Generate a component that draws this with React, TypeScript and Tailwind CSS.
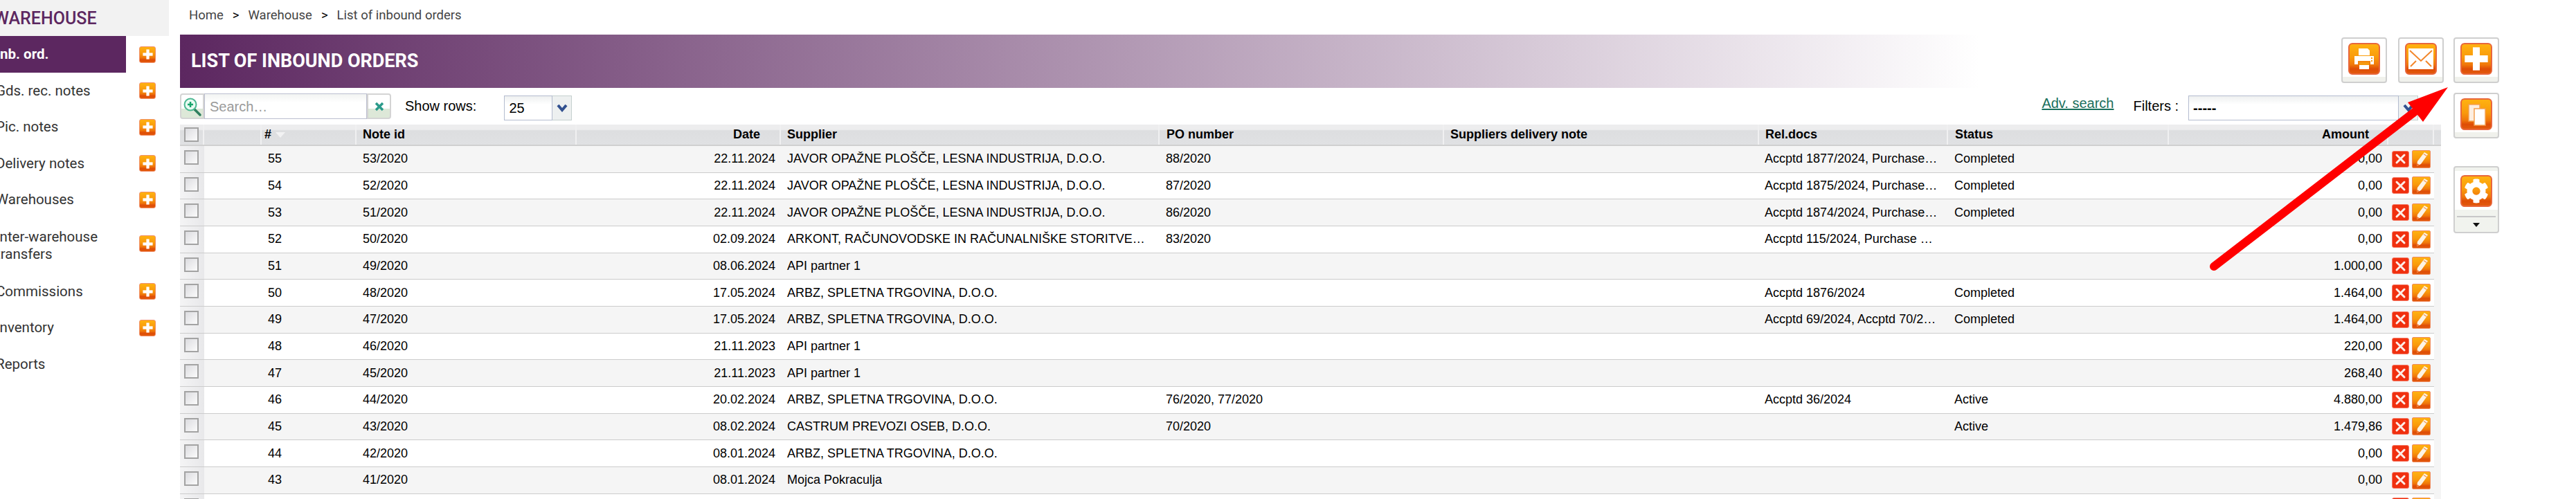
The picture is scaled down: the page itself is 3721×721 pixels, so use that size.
import { FaCog } from "react-icons/fa";

const sans = "font-['Liberation_Sans',Arial,sans-serif]";
const roboto = "font-['Roboto',sans-serif]";

// column template shared by the header and the body rows
const cols = "grid grid-cols-[35px_83px_137px_318px_295px_547px_411px_455px_273px_319px_317px_66px]";

const orange = "bg-[linear-gradient(to_bottom,#ffb210_0%,#f99a0c_45%,#f0780a_70%,#de4c06_85%,#e25a0c_100%)]";

type Row = {
  n: string;
  note: string;
  date: string;
  supplier: string;
  po?: string;
  rel?: string;
  status?: string;
  amount: string;
};

const JAVOR = "JAVOR OPAŽNE PLOŠČE, LESNA INDUSTRIJA, D.O.O.";
const ARBZ = "ARBZ, SPLETNA TRGOVINA, D.O.O.";

const rows: Row[] = [
  { n: "55", note: "53/2020", date: "22.11.2024", supplier: JAVOR, po: "88/2020", rel: "Accptd 1877/2024, Purchase…", status: "Completed", amount: "0,00" },
  { n: "54", note: "52/2020", date: "22.11.2024", supplier: JAVOR, po: "87/2020", rel: "Accptd 1875/2024, Purchase…", status: "Completed", amount: "0,00" },
  { n: "53", note: "51/2020", date: "22.11.2024", supplier: JAVOR, po: "86/2020", rel: "Accptd 1874/2024, Purchase…", status: "Completed", amount: "0,00" },
  { n: "52", note: "50/2020", date: "02.09.2024", supplier: "ARKONT, RAČUNOVODSKE IN RAČUNALNIŠKE STORITVE…", po: "83/2020", rel: "Accptd 115/2024, Purchase …", amount: "0,00" },
  { n: "51", note: "49/2020", date: "08.06.2024", supplier: "API partner 1", amount: "1.000,00" },
  { n: "50", note: "48/2020", date: "17.05.2024", supplier: ARBZ, rel: "Accptd 1876/2024", status: "Completed", amount: "1.464,00" },
  { n: "49", note: "47/2020", date: "17.05.2024", supplier: ARBZ, rel: "Accptd 69/2024, Accptd 70/2…", status: "Completed", amount: "1.464,00" },
  { n: "48", note: "46/2020", date: "21.11.2023", supplier: "API partner 1", amount: "220,00" },
  { n: "47", note: "45/2020", date: "21.11.2023", supplier: "API partner 1", amount: "268,40" },
  { n: "46", note: "44/2020", date: "20.02.2024", supplier: ARBZ, po: "76/2020, 77/2020", rel: "Accptd 36/2024", status: "Active", amount: "4.880,00" },
  { n: "45", note: "43/2020", date: "08.02.2024", supplier: "CASTRUM PREVOZI OSEB, D.O.O.", po: "70/2020", status: "Active", amount: "1.479,86" },
  { n: "44", note: "42/2020", date: "08.01.2024", supplier: ARBZ, amount: "0,00" },
  { n: "43", note: "41/2020", date: "08.01.2024", supplier: "Mojca Pokraculja", amount: "0,00" },
];

const menu = ["Gds. rec. notes", "Pic. notes", "Delivery notes", "Warehouses"];

function PlusGlyph({ size }: { size: number }) {
  return (
    <svg width={size} height={size} viewBox="0 0 24 24" fill="#fff">
      <rect x="9" y="2" width="6" height="20" />
      <rect x="2" y="9" width="20" height="6" />
    </svg>
  );
}

function SmallPlus() {
  return (
    <div className={`w-[24px] h-[24px] rounded-[3px] border border-[#f0906a] flex items-center justify-center ${orange}`}>
      <PlusGlyph size={17} />
    </div>
  );
}

function OrangeBox({ children }: { children: React.ReactNode }) {
  return (
    <div className={`w-[46px] h-[46px] rounded-[6px] border-2 border-[#e8673c] flex items-center justify-center ${orange}`}>
      {children}
    </div>
  );
}

function ToolButton({ children, className = "" }: { children: React.ReactNode; className?: string }) {
  return (
    <div className={`w-[66px] h-[66px] rounded-[4px] border-2 border-[#cfcfcf] bg-[linear-gradient(to_bottom,#fff_88%,#f0f1ec_88%)] flex justify-center pt-[6px] ${className}`}>
      <OrangeBox>{children}</OrangeBox>
    </div>
  );
}

function Checkbox() {
  return (
    <div className="w-[21px] h-[21px] border-2 border-[#a3a3a3] bg-[linear-gradient(135deg,#dcdce0,#fbfbfb)]" />
  );
}

function DeleteIcon() {
  return (
    <div className="w-[25px] h-[24px] rounded-[3px] bg-[#f0300f] border border-[#f57a66] flex items-center justify-center">
      <svg width="17" height="17" viewBox="0 0 17 17" stroke="#fdeee8" strokeWidth="3" strokeLinecap="round">
        <path d="M3 3 L14 14 M14 3 L3 14" />
      </svg>
    </div>
  );
}

function EditIcon() {
  return (
    <div className={`w-[27px] h-[26px] rounded-[2px] border border-[#ef8a5c] flex items-center justify-center ${orange}`}>
      <svg width="24" height="24" viewBox="0 0 24 24">
        <path d="M16 2 L21 5 L11 19 L5 22 L6 15 Z" fill="#fdf3e4" />
        <path d="M5 22 L5.6 18 L8.5 20 Z" fill="#f06a1a" />
        <path d="M15 4.5 L19.5 7.5" stroke="#f09a5a" strokeWidth="1.5" />
      </svg>
    </div>
  );
}

function SelectBox({ value, width, btn, bold }: { value: string; width: string; btn: string; bold?: boolean }) {
  return (
    <div className="flex h-[36px]">
      <div className={`${width} h-full border border-[#b4bccf] bg-[linear-gradient(to_bottom,#eef0f0,#fff_35%)] flex items-center px-[6px] text-[20px] text-black ${bold ? "font-bold" : ""}`}>
        {value}
      </div>
      <div className={`${btn} h-full border border-l-0 border-[#c5d0cf] bg-[#edf0f0] flex items-center justify-center`}>
        <svg width="16" height="12" viewBox="0 0 16 12" fill="none" stroke="#31508f" strokeWidth="4">
          <path d="M2 2 L8 9 L14 2" />
        </svg>
      </div>
    </div>
  );
}

function HeaderCell({ children, className = "" }: { children?: React.ReactNode; className?: string }) {
  return (
    <div className={`h-full flex items-center border-r-2 border-[#f0f0f1] font-bold text-[18px] text-black ${className}`}>
      {children}
    </div>
  );
}

export default function App() {
  return (
    <div className={`relative w-[3721px] h-[721px] overflow-hidden bg-white flex ${sans}`}>
      {/* sidebar, scrolled a little to the left */}
      <aside className={`w-[244px] shrink-0 ${roboto} text-[20.5px] text-[#333]`}>
        <div className="h-[52px] bg-[#f2f2f2] flex items-center pt-[2px]">
          <span className="-ml-[9px] text-[25px] font-medium text-[#5c2760]">WAREHOUSE</span>
        </div>
        <div className="h-[53px] flex items-center">
          <div className="w-[182px] h-full bg-[#5c2760] flex items-center text-white font-bold">
            <span className="-ml-[6px]">Inb. ord.</span>
          </div>
          <div className="ml-[19px]"><SmallPlus /></div>
        </div>
        {menu.map((m) => (
          <div key={m} className="h-[52.5px] flex items-center">
            <span className="w-[207px] -ml-[6px] shrink-0">{m}</span>
            <SmallPlus />
          </div>
        ))}
        <div className="h-[80px] flex items-center">
          <span className="w-[207px] -ml-[6px] shrink-0 leading-[25px]">Inter-warehouse<br />transfers</span>
          <div className="mb-[6px]"><SmallPlus /></div>
        </div>
        <div className="h-[52.5px] flex items-center">
          <span className="w-[207px] -ml-[6px] shrink-0">Commissions</span>
          <SmallPlus />
        </div>
        <div className="h-[52.5px] flex items-center">
          <span className="w-[207px] -ml-[6px] shrink-0">Inventory</span>
          <SmallPlus />
        </div>
        <div className="h-[52.5px] flex items-center">
          <span className="-ml-[6px]">Reports</span>
        </div>
      </aside>

      <main className="w-[3284px] ml-[16px] shrink-0">
        <div className={`h-[50px] flex items-center pl-[13px] pb-[4px] gap-[13px] text-[18.5px] text-[#444] ${roboto}`}>
          <span>Home</span><span className="text-black">&gt;</span>
          <span>Warehouse</span><span className="text-black">&gt;</span>
          <span>List of inbound orders</span>
        </div>

        {/* title banner + print / mail buttons */}
        <div className="h-[77px] flex">
          <div className={`w-[2600px] h-full flex items-center pl-[16px] bg-[linear-gradient(to_right,#5c2760,#ffffff)] text-white font-bold text-[27px] ${roboto}`}>
            LIST OF INBOUND ORDERS
          </div>
          <div className="flex ml-[522px] mt-[4px] gap-[16px]">
            <ToolButton>
              <svg width="34" height="34" viewBox="0 0 34 34" fill="#fff">
                <path d="M9 2 H22 L25 5 V12 H9 Z" />
                <path d="M3 13 H31 V25 H26 V20 H8 V25 H3 Z" />
                <rect x="10" y="22" width="14" height="10" />
                <rect x="10" y="22" width="14" height="4" fill="#f59a10" />
                <rect x="27" y="15" width="2" height="2" fill="#f59a10" />
                <rect x="27" y="19" width="2" height="2" fill="#f59a10" />
              </svg>
            </ToolButton>
            <ToolButton>
              <svg width="38" height="32" viewBox="0 0 38 32">
                <rect x="1" y="1" width="36" height="30" fill="#fff" />
                <path d="M3 4 L19 19 L35 4 M4 27 L12 19 M34 27 L26 19" fill="none" stroke="#f3862a" strokeWidth="2" />
              </svg>
            </ToolButton>
          </div>
        </div>

        {/* search row */}
        <div className="h-[53px] flex items-start pt-[8px] text-[20px]">
          <div className="w-[35px] h-[37px] rounded-l-[4px] border-2 border-[#d4d4d4] bg-[linear-gradient(to_bottom,#fff_60%,#dde8d8_60%)] flex items-center justify-center">
            <svg width="28" height="30" viewBox="0 0 28 30">
              <path d="M17 19 L25 27" stroke="#2f7f5f" strokeWidth="3.5" strokeLinecap="round" />
              <circle cx="11" cy="12" r="8.5" fill="#e8fbf2" stroke="#4cb892" strokeWidth="2" />
              <path d="M11 8 V16 M7 12 H15" stroke="#17a56c" strokeWidth="2.5" />
            </svg>
          </div>
          <div className="w-[235px] h-[37px] border border-[#bcbfd0] bg-[linear-gradient(to_bottom,#f2f4f2,#fff_35%)] flex items-center pl-[7px] text-[#9a9a9a]">
            Search…
          </div>
          <div className="w-[35px] h-[37px] rounded-r-[4px] border-2 border-[#d4d4d4] bg-[linear-gradient(to_bottom,#fff_60%,#dde8d8_60%)] flex items-center justify-center">
            <svg width="16" height="16" viewBox="0 0 16 16" stroke="#2a9a8a" strokeWidth="3.5">
              <path d="M3 3 L13 13 M13 3 L3 13" />
            </svg>
          </div>
          <span className="ml-[20px] leading-[37px] text-black">Show rows:</span>
          <div className="ml-[40px] mt-[3px]">
            <SelectBox value="25" width="w-[70px]" btn="w-[28px]" />
          </div>
          <a className="ml-[2123px] leading-[28px] text-[#1a6f5c] underline">Adv. search</a>
          <span className="ml-[28px] leading-[37px] text-black">Filters :</span>
          <div className="ml-[14px] mt-[3px]">
            <SelectBox value="-----" width="w-[304px]" btn="w-[28px]" bold />
          </div>
        </div>

        {/* table */}
        <div className="w-[3266px] h-[541px] bg-[#f5f5f5] overflow-hidden">
          <div className={`${cols} w-[3266px] h-[31px] items-center bg-[linear-gradient(to_bottom,#ededee_25%,#dddee0_30%,#e0e1e3_100%)] border-b-2 border-[#d0d0d0]`}>
            <HeaderCell className="pl-[6px]"><Checkbox /></HeaderCell>
            <HeaderCell />
            <HeaderCell className="pl-[4px]">
              #
              <svg className="ml-[6px]" width="14" height="8" viewBox="0 0 14 8" fill="#f2f2f3"><path d="M0 0 H14 L7 8 Z" /></svg>
            </HeaderCell>
            <HeaderCell className="pl-[9px]">Note id</HeaderCell>
            <HeaderCell className="justify-end pr-[28px]">Date</HeaderCell>
            <HeaderCell className="pl-[9px]">Supplier</HeaderCell>
            <HeaderCell className="pl-[10px]">PO number</HeaderCell>
            <HeaderCell className="pl-[9px]">Suppliers delivery note</HeaderCell>
            <HeaderCell className="pl-[9px]">Rel.docs</HeaderCell>
            <HeaderCell className="pl-[10px]">Status</HeaderCell>
            <HeaderCell className="justify-end pr-[26px]">Amount</HeaderCell>
            <HeaderCell />
          </div>

          {rows.map((r, i) => (
            <div
              key={r.n}
              className={`${cols} w-[3256px] h-[38.67px] items-center border-b border-[#cccccc] text-[18px] text-black ${i % 2 === 0 ? "bg-[#f5f5f5]" : "bg-white"}`}
            >
              <div className="h-full pl-[6px] pt-[6px] bg-[linear-gradient(to_right,#f4f4f5,#e8e8ea)]"><Checkbox /></div>
              <div />
              <div className="pl-[9px]">{r.n}</div>
              <div className="pl-[9px]">{r.note}</div>
              <div className="text-right pr-[8px]">{r.date}</div>
              <div className="pl-[9px] whitespace-nowrap overflow-hidden">{r.supplier}</div>
              <div className="pl-[9px]">{r.po}</div>
              <div />
              <div className="pl-[8px] whitespace-nowrap overflow-hidden">{r.rel}</div>
              <div className="pl-[9px]">{r.status}</div>
              <div className="text-right pr-[9px]">{r.amount}</div>
              <div className="flex items-center gap-[4px] pl-[5px]">
                <DeleteIcon />
                <EditIcon />
              </div>
            </div>
          ))}

          {/* next row, cut off by the window */}
          <div className={`${cols} w-[3256px] h-[30px] bg-white`}>
            <div className="h-full pl-[6px] pt-[6px] bg-[linear-gradient(to_right,#f4f4f5,#e8e8ea)]"><Checkbox /></div>
            <div />
            <div />
            <div />
            <div />
            <div />
            <div />
            <div />
            <div />
            <div />
            <div />
            <div className="flex items-start gap-[4px] pl-[5px] pt-[5px]">
              <DeleteIcon />
              <EditIcon />
            </div>
          </div>
        </div>
      </main>

      {/* tool column on the right */}
      <div className="w-[66px] pt-[54px] flex flex-col shrink-0">
        <ToolButton>
          <PlusGlyph size={40} />
        </ToolButton>
        <ToolButton className="mt-[14px]">
          <svg width="30" height="34" viewBox="0 0 30 34">
            <rect x="4" y="3" width="16" height="24" fill="#fdeee0" stroke="#f3a050" strokeWidth="1.5" />
            <rect x="12" y="9" width="16" height="24" fill="#fff" stroke="#f3a050" strokeWidth="1.5" />
          </svg>
        </ToolButton>
        <div className="mt-[40px] h-[97px] rounded-[4px] border-2 border-[#cfcfcf] bg-[#f1f3ee] flex flex-col items-center overflow-hidden">
          <div className="mt-[5px] w-full h-[56px] bg-white flex justify-center pt-[6px]">
            <OrangeBox><FaCog size={36} color="#fff" /></OrangeBox>
          </div>
          <div className="mt-[9px] w-[56px] border-t-2 border-[#c8c8c8]" />
          <div className="w-full flex-1 flex items-center justify-center">
            <svg width="10" height="6" viewBox="0 0 10 6" fill="#111"><path d="M0 0 H10 L5 6 Z" /></svg>
          </div>
        </div>
      </div>

      {/* red annotation arrow over the page */}
      <svg className="absolute inset-0 pointer-events-none" width="3721" height="721" viewBox="0 0 3721 721">
        <path d="M3198 385 L3490 160" stroke="#ff0000" strokeWidth="12" strokeLinecap="round" fill="none" />
        <path d="M3536 126 L3478 148 L3500 176 Z" fill="#ff0000" />
      </svg>
    </div>
  );
}
